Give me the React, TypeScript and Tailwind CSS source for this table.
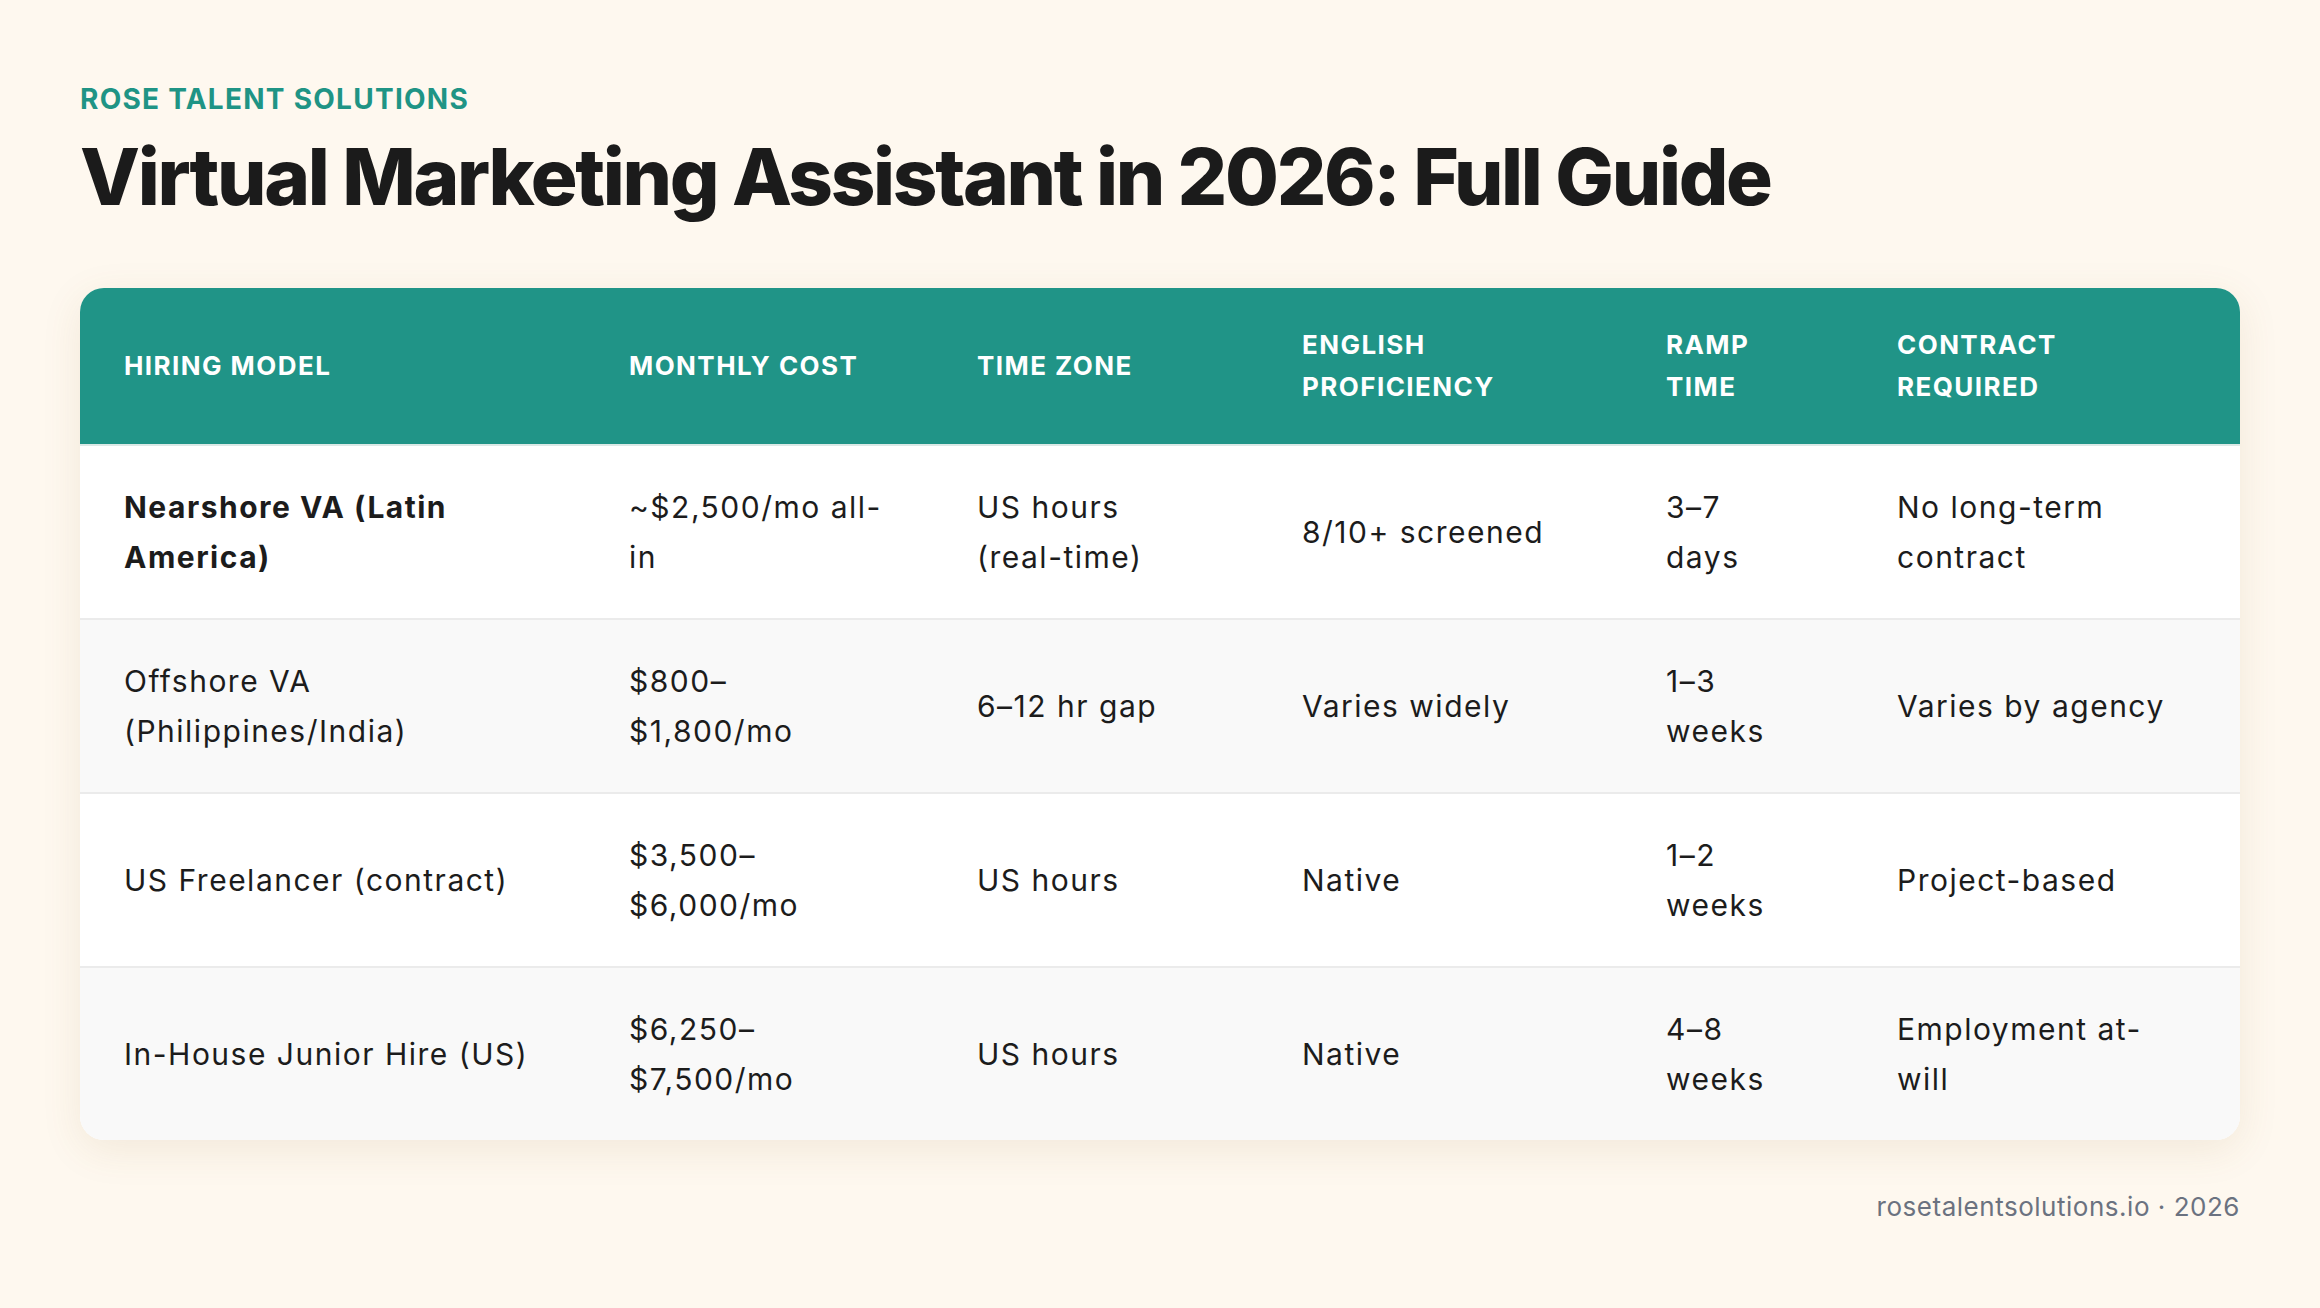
import React from 'react'

const FONT = "font-['Inter','Noto_Sans',sans-serif]"

const COLS = [
  { key: 'model', label: ['HIRING MODEL'], w: 'w-[505px]' },
  { key: 'cost', label: ['MONTHLY COST'], w: 'w-[348px]' },
  { key: 'tz', label: ['TIME ZONE'], w: 'w-[325px]' },
  { key: 'eng', label: ['ENGLISH', 'PROFICIENCY'], w: 'w-[364px]' },
  { key: 'ramp', label: ['RAMP', 'TIME'], w: 'w-[231px]' },
  { key: 'contract', label: ['CONTRACT', 'REQUIRED'], w: 'w-[387px]' },
]

// each cell is a list of lines, broken as in the design
const ROWS: string[][][] = [
  [['Nearshore VA (Latin', 'America)'], ['~$2,500/mo all-', 'in'], ['US hours', '(real-time)'], ['8/10+ screened'], ['3–7', 'days'], ['No long-term', 'contract']],
  [['Offshore VA', '(Philippines/India)'], ['$800–', '$1,800/mo'], ['6–12 hr gap'], ['Varies widely'], ['1–3', 'weeks'], ['Varies by agency']],
  [['US Freelancer (contract)'], ['$3,500–', '$6,000/mo'], ['US hours'], ['Native'], ['1–2', 'weeks'], ['Project-based']],
  [['In-House Junior Hire (US)'], ['$6,250–', '$7,500/mo'], ['US hours'], ['Native'], ['4–8', 'weeks'], ['Employment at-', 'will']],
]

export default function App() {
  return (
    <div className={`min-h-[1308px] w-full bg-[#fef8ef] ${FONT}`}>
      <div className="px-[80px] pt-[82px] pb-[60px]">
        <p className="text-[28px] leading-[34px] font-bold tracking-[0.045em] uppercase text-[#1f9485]">
          Rose Talent Solutions
        </p>
        <h1 className="mt-[17px] text-[78px] leading-[88px] font-extrabold tracking-[-0.03em] text-[#1b1b1b]">
          Virtual Marketing Assistant in 2026: Full Guide
        </h1>

        <div className="mt-[67px] rounded-[24px] overflow-hidden bg-white shadow-[0_10px_40px_rgba(140,100,40,0.10)]">
          <table className="w-full table-fixed border-collapse">
            <colgroup>
              {COLS.map(c => <col key={c.key} className={c.w} />)}
            </colgroup>
            <thead>
              <tr className="bg-[#209487] border-b-2 border-[#dbe9e6]">
                {COLS.map(c => (
                  <th key={c.key}
                    className="px-[44px] py-[36px] text-left align-middle text-[26px] leading-[42px] font-bold tracking-[0.055em] text-white whitespace-nowrap">
                    {c.label.map((l, i) => <div key={i}>{l}</div>)}
                  </th>
                ))}
              </tr>
            </thead>
            <tbody>
              {ROWS.map((row, ri) => (
                <tr key={ri} className={`${ri % 2 ? 'bg-[#f9f9f9]' : 'bg-white'} ${ri < ROWS.length - 1 ? 'border-b-2 border-[#ebebeb]' : ''}`}>
                  {row.map((cell, ci) => (
                    <td key={ci}
                      className={`px-[44px] py-[36px] align-middle text-[30px] leading-[50px] tracking-[0.05em] text-[#1c1c1c] whitespace-nowrap ${ri === 0 && ci === 0 ? 'font-bold' : 'font-normal'}`}>
                      {cell.map((l, i) => <div key={i}>{l}</div>)}
                    </td>
                  ))}
                </tr>
              ))}
            </tbody>
          </table>
        </div>

        <div className="mt-[51px] flex justify-end">
          <p className="text-[26px] leading-[32px] tracking-[0.02em] text-[#6b7280]">rosetalentsolutions.io · 2026</p>
        </div>
      </div>
    </div>
  )
}
